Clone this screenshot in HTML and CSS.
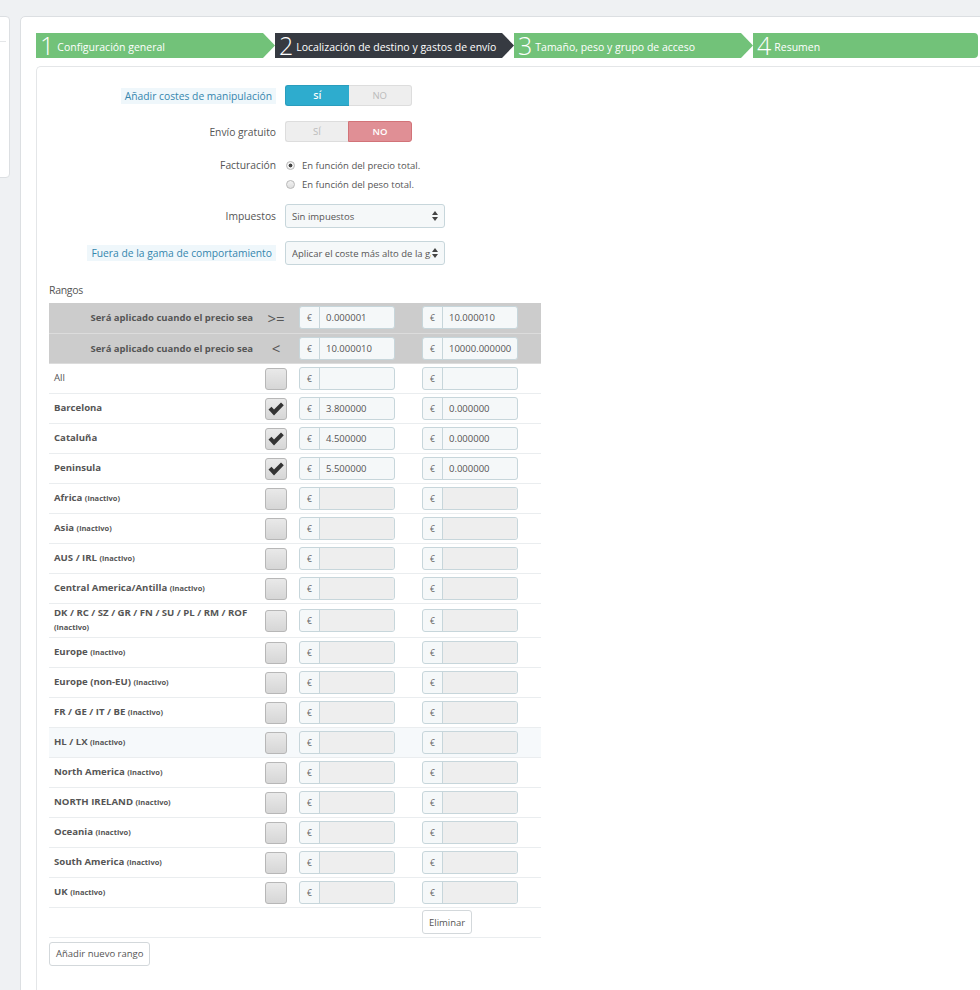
FILE: index.html
```html
<!DOCTYPE html>
<html lang="es">
<head>
    <meta charset="UTF-8">
    <title>Transportista - Localización de destino y gastos de envío</title>
    <link rel="stylesheet" href="styles.css">
</head>
<body>
    <div class="page">
        <aside class="side-panel"><div class="side-line"></div></aside>

        <main class="main-panel">
            <ol class="steps">
                <li class="step step-done"><span class="step-number">1</span><span class="step-label">Configuración general</span></li>
                <li class="step step-current"><span class="step-number">2</span><span class="step-label">Localización de destino y gastos de envío</span></li>
                <li class="step step-done"><span class="step-number">3</span><span class="step-label">Tamaño, peso y grupo de acceso</span></li>
                <li class="step step-done step-last"><span class="step-number">4</span><span class="step-label">Resumen</span></li>
            </ol>

            <section class="step-content">
                <div class="form-row">
                    <div class="form-label"><span class="label-tooltip">Añadir costes de manipulación</span></div>
                    <div class="switch">
                        <span class="switch-option switch-on">SÍ</span>
                        <span class="switch-option">NO</span>
                    </div>
                </div>

                <div class="form-row row-tight">
                    <div class="form-label">Envío gratuito</div>
                    <div class="switch">
                        <span class="switch-option">SÍ</span>
                        <span class="switch-option switch-off">NO</span>
                    </div>
                </div>

                <div class="form-row form-row-top">
                    <div class="form-label">Facturación</div>
                    <div class="radio-group">
                        <label class="radio"><span class="radio-dot checked"></span>En función del precio total.</label>
                        <label class="radio"><span class="radio-dot"></span>En función del peso total.</label>
                    </div>
                </div>

                <div class="form-row row-select">
                    <div class="form-label">Impuestos</div>
                    <div class="select">
                        <span class="select-text">Sin impuestos</span>
                        <svg class="select-arrows" width="6" height="10" viewBox="0 0 6 10"><path d="M3 0 L6 4 L0 4 Z M0 6 L6 6 L3 10 Z" fill="#444"/></svg>
                    </div>
                </div>

                <div class="form-row row-last">
                    <div class="form-label"><span class="label-tooltip">Fuera de la gama de comportamiento</span></div>
                    <div class="select">
                        <span class="select-text">Aplicar el coste más alto de la gama definida</span>
                        <svg class="select-arrows" width="6" height="10" viewBox="0 0 6 10"><path d="M3 0 L6 4 L0 4 Z M0 6 L6 6 L3 10 Z" fill="#444"/></svg>
                    </div>
                </div>

                <div class="ranges-block">
                    <h3 class="ranges-title">Rangos</h3>

                    <table class="ranges">
                        <colgroup>
                            <col class="col-zone">
                            <col class="col-check">
                            <col class="col-range">
                            <col class="col-range-last">
                        </colgroup>
                        <tr class="range-head">
                            <td class="head-label">Será aplicado cuando el precio sea</td>
                            <td class="head-sign">&gt;=</td>
                            <td><div class="input-group"><span class="addon">€</span><span class="input">0.000001</span></div></td>
                            <td><div class="input-group"><span class="addon">€</span><span class="input">10.000010</span></div></td>
                        </tr>
                        <tr class="range-head">
                            <td class="head-label">Será aplicado cuando el precio sea</td>
                            <td class="head-sign">&lt;</td>
                            <td><div class="input-group"><span class="addon">€</span><span class="input">10.000010</span></div></td>
                            <td><div class="input-group"><span class="addon">€</span><span class="input">10000.000000</span></div></td>
                        </tr>
                        <tr>
                            <td class="zone zone-all">All</td>
                            <td><span class="check"></span></td>
                            <td><div class="input-group"><span class="addon">€</span><span class="input"></span></div></td>
                            <td><div class="input-group"><span class="addon">€</span><span class="input"></span></div></td>
                        </tr>
                        <tr>
                            <td class="zone">Barcelona</td>
                            <td><span class="check checked"><svg width="18" height="18" viewBox="0 0 18 18"><path d="M1.5 9.5 L4.5 6.8 L7 9.6 L14 2.5 L16.8 5.3 L7 15.5 Z" fill="#333"/></svg></span></td>
                            <td><div class="input-group"><span class="addon">€</span><span class="input">3.800000</span></div></td>
                            <td><div class="input-group"><span class="addon">€</span><span class="input">0.000000</span></div></td>
                        </tr>
                        <tr>
                            <td class="zone">Cataluña</td>
                            <td><span class="check checked"><svg width="18" height="18" viewBox="0 0 18 18"><path d="M1.5 9.5 L4.5 6.8 L7 9.6 L14 2.5 L16.8 5.3 L7 15.5 Z" fill="#333"/></svg></span></td>
                            <td><div class="input-group"><span class="addon">€</span><span class="input">4.500000</span></div></td>
                            <td><div class="input-group"><span class="addon">€</span><span class="input">0.000000</span></div></td>
                        </tr>
                        <tr>
                            <td class="zone">Peninsula</td>
                            <td><span class="check checked"><svg width="18" height="18" viewBox="0 0 18 18"><path d="M1.5 9.5 L4.5 6.8 L7 9.6 L14 2.5 L16.8 5.3 L7 15.5 Z" fill="#333"/></svg></span></td>
                            <td><div class="input-group"><span class="addon">€</span><span class="input">5.500000</span></div></td>
                            <td><div class="input-group"><span class="addon">€</span><span class="input">0.000000</span></div></td>
                        </tr>
                        <tr class="disabled">
                            <td class="zone">Africa <small>(inactivo)</small></td>
                            <td><span class="check"></span></td>
                            <td><div class="input-group"><span class="addon">€</span><span class="input"></span></div></td>
                            <td><div class="input-group"><span class="addon">€</span><span class="input"></span></div></td>
                        </tr>
                        <tr class="disabled">
                            <td class="zone">Asia <small>(inactivo)</small></td>
                            <td><span class="check"></span></td>
                            <td><div class="input-group"><span class="addon">€</span><span class="input"></span></div></td>
                            <td><div class="input-group"><span class="addon">€</span><span class="input"></span></div></td>
                        </tr>
                        <tr class="disabled">
                            <td class="zone">AUS / IRL <small>(inactivo)</small></td>
                            <td><span class="check"></span></td>
                            <td><div class="input-group"><span class="addon">€</span><span class="input"></span></div></td>
                            <td><div class="input-group"><span class="addon">€</span><span class="input"></span></div></td>
                        </tr>
                        <tr class="disabled">
                            <td class="zone">Central America/Antilla <small>(inactivo)</small></td>
                            <td><span class="check"></span></td>
                            <td><div class="input-group"><span class="addon">€</span><span class="input"></span></div></td>
                            <td><div class="input-group"><span class="addon">€</span><span class="input"></span></div></td>
                        </tr>
                        <tr class="disabled tall">
                            <td class="zone">DK / RC / SZ / GR / FN / SU / PL / RM / ROF <small>(inactivo)</small></td>
                            <td><span class="check"></span></td>
                            <td><div class="input-group"><span class="addon">€</span><span class="input"></span></div></td>
                            <td><div class="input-group"><span class="addon">€</span><span class="input"></span></div></td>
                        </tr>
                        <tr class="disabled">
                            <td class="zone">Europe <small>(inactivo)</small></td>
                            <td><span class="check"></span></td>
                            <td><div class="input-group"><span class="addon">€</span><span class="input"></span></div></td>
                            <td><div class="input-group"><span class="addon">€</span><span class="input"></span></div></td>
                        </tr>
                        <tr class="disabled">
                            <td class="zone">Europe (non-EU) <small>(inactivo)</small></td>
                            <td><span class="check"></span></td>
                            <td><div class="input-group"><span class="addon">€</span><span class="input"></span></div></td>
                            <td><div class="input-group"><span class="addon">€</span><span class="input"></span></div></td>
                        </tr>
                        <tr class="disabled">
                            <td class="zone">FR / GE / IT / BE <small>(inactivo)</small></td>
                            <td><span class="check"></span></td>
                            <td><div class="input-group"><span class="addon">€</span><span class="input"></span></div></td>
                            <td><div class="input-group"><span class="addon">€</span><span class="input"></span></div></td>
                        </tr>
                        <tr class="disabled hover">
                            <td class="zone">HL / LX <small>(inactivo)</small></td>
                            <td><span class="check"></span></td>
                            <td><div class="input-group"><span class="addon">€</span><span class="input"></span></div></td>
                            <td><div class="input-group"><span class="addon">€</span><span class="input"></span></div></td>
                        </tr>
                        <tr class="disabled">
                            <td class="zone">North America <small>(inactivo)</small></td>
                            <td><span class="check"></span></td>
                            <td><div class="input-group"><span class="addon">€</span><span class="input"></span></div></td>
                            <td><div class="input-group"><span class="addon">€</span><span class="input"></span></div></td>
                        </tr>
                        <tr class="disabled">
                            <td class="zone">NORTH IRELAND <small>(inactivo)</small></td>
                            <td><span class="check"></span></td>
                            <td><div class="input-group"><span class="addon">€</span><span class="input"></span></div></td>
                            <td><div class="input-group"><span class="addon">€</span><span class="input"></span></div></td>
                        </tr>
                        <tr class="disabled">
                            <td class="zone">Oceania <small>(inactivo)</small></td>
                            <td><span class="check"></span></td>
                            <td><div class="input-group"><span class="addon">€</span><span class="input"></span></div></td>
                            <td><div class="input-group"><span class="addon">€</span><span class="input"></span></div></td>
                        </tr>
                        <tr class="disabled">
                            <td class="zone">South America <small>(inactivo)</small></td>
                            <td><span class="check"></span></td>
                            <td><div class="input-group"><span class="addon">€</span><span class="input"></span></div></td>
                            <td><div class="input-group"><span class="addon">€</span><span class="input"></span></div></td>
                        </tr>
                        <tr class="disabled">
                            <td class="zone">UK <small>(inactivo)</small></td>
                            <td><span class="check"></span></td>
                            <td><div class="input-group"><span class="addon">€</span><span class="input"></span></div></td>
                            <td><div class="input-group"><span class="addon">€</span><span class="input"></span></div></td>
                        </tr>
                        <tr class="actions">
                            <td></td>
                            <td></td>
                            <td></td>
                            <td><button class="btn" type="button">Eliminar</button></td>
                        </tr>
                    </table>

                    <button class="btn btn-add" type="button">Añadir nuevo rango</button>
                </div>
            </section>
        </main>
    </div>
</body>
</html>
```

FILE: styles.css
```css
* {
    margin: 0;
    padding: 0;
    box-sizing: border-box;
}

html, body {
    overflow: hidden;
}

body {
    font-family: 'Open Sans', 'Liberation Sans', sans-serif;
    font-size: 10px;
    color: #555555;
    background: #eff1f3;
    height: 990px;
}

.page {
    display: flex;
    align-items: flex-start;
    padding-top: 16px;
}

.side-panel {
    flex: none;
    width: 30px;
    height: 162px;
    margin-left: -20px;
    margin-right: 10px;
    padding-top: 24px;
    background: #ffffff;
    border: 1px solid #dcdfe2;
    border-radius: 4px;
}

.side-line {
    height: 1px;
    margin-right: 3px;
    background: #e4e6e8;
}

.main-panel {
    flex: none;
    width: 1000px;
    min-height: 1000px;
    padding: 16px 0 0 15px;
    background: #ffffff;
    border: 1px solid #dcdfe2;
    border-radius: 5px 0 0 0;
}

/* wizard steps */
.steps {
    list-style: none;
    display: flex;
    width: 942px;
    height: 25px;
}

.step {
    flex: none;
    width: 239px;
    display: flex;
    align-items: center;
    padding-left: 4px;
    color: #ffffff;
    background: #72c279;
    clip-path: polygon(0 0, calc(100% - 12px) 0, 100% 50%, calc(100% - 12px) 100%, 0 100%);
}

.step-current {
    background: #363a41;
}

.step-last {
    flex: 1;
    width: auto;
    clip-path: none;
    border-radius: 0 4px 4px 0;
}

.step-number {
    font-size: 25px;
    font-weight: 300;
    line-height: 25px;
    margin-right: 3px;
}

.step-label {
    font-size: 10.5px;
    padding-top: 2px;
}

/* step content */
.step-content {
    margin-top: 8px;
    min-height: 1000px;
    padding-top: 18px;
    border: 1px solid #e4e6e8;
    border-right: none;
    border-radius: 5px 0 0 0;
}

.form-row {
    display: grid;
    grid-template-columns: 239px 160px;
    column-gap: 9px;
    align-items: center;
    margin-bottom: 15px;
}

.row-tight {
    margin-bottom: 14px;
}

.row-select {
    margin-bottom: 13px;
}

.row-last {
    margin-bottom: 0;
}

.form-row-top {
    align-items: start;
    margin-bottom: 10px;
}

.form-row-top .form-label {
    line-height: 19px;
}

.form-label {
    text-align: right;
    font-size: 10.3px;
    color: #555555;
}

.label-tooltip {
    display: inline-block;
    padding: 1px 4px 1px 4px;
    background: #eff7fb;
    color: #3586ae;
}

/* switch */
.switch {
    display: flex;
    width: 127px;
    height: 21px;
}

.switch-option {
    flex: 1;
    display: flex;
    align-items: center;
    justify-content: center;
    font-size: 9.5px;
    color: #bbbbbb;
    background: #eeeeee;
    border: 1px solid #dddddd;
}

.switch-option:first-child {
    border-radius: 3px 0 0 3px;
    border-right: none;
}

.switch-option:last-child {
    border-radius: 0 3px 3px 0;
    border-left: none;
}

.switch-on {
    background: #2eacce;
    border-color: #2a9dbd;
    color: #ffffff;
    font-weight: 600;
}

.switch-off {
    background: #e08f95;
    border-color: #d27378;
    border-left: 1px solid #d27378 !important;
    color: #ffffff;
    font-weight: 600;
}

/* radios */
.radio-group {
    display: flex;
    flex-direction: column;
}

.radio {
    display: flex;
    align-items: center;
    height: 19px;
    font-size: 9.5px;
    white-space: nowrap;
}

.radio-dot {
    width: 9px;
    height: 9px;
    margin: 0 7px 0 1px;
    border: 1px solid #b8b8b8;
    border-radius: 50%;
    background: linear-gradient(#f2f2f2, #dedede);
}

.radio-dot.checked {
    background: radial-gradient(circle, #444444 0 1.7px, #f2f2f2 2.2px);
}

/* select */
.select {
    display: flex;
    align-items: center;
    width: 160px;
    height: 24px;
    padding: 0 6px 0 6px;
    background: #f5f8f9;
    border: 1px solid #c7d6db;
    border-radius: 3px;
    font-size: 9.5px;
    color: #555555;
}

.select-text {
    flex: 1;
    overflow: hidden;
    white-space: nowrap;
}

.select-arrows {
    flex: none;
    margin-left: 1px;
}

/* ranges */
.ranges-block {
    padding-left: 12px;
    padding-top: 18px;
}

.ranges-title {
    font-size: 10.5px;
    font-weight: normal;
    color: #555555;
    line-height: 14px;
    margin-bottom: 6px;
    letter-spacing: -0.3px;
}

.ranges {
    width: 492px;
    border-collapse: collapse;
    table-layout: fixed;
}

.col-zone { width: 206px; }
.col-check { width: 42px; }
.col-range { width: 123px; }
.col-range-last { width: 121px; }

.ranges td {
    height: 30px;
    padding: 0;
    vertical-align: middle;
    border-bottom: 1px solid #eaedef;
}

.ranges td:nth-child(2) {
    text-align: center;
}

.ranges td:nth-child(3),
.ranges td:nth-child(4) {
    padding-left: 2px;
}

.range-head td {
    background: #cccccc;
    border-bottom: 1px solid #dcdcdc;
}

.head-label {
    text-align: right;
    padding-right: 2px !important;
    font-size: 9.5px;
    font-weight: bold;
    color: #555555;
}

.head-sign {
    font-size: 15px;
    color: #555555;
}

.zone {
    padding-left: 5px !important;
    font-size: 9.6px;
    font-weight: bold;
    line-height: 14px;
}

.zone small {
    font-size: 7.5px;
}

.zone-all {
    font-weight: normal;
}

.tall td {
    height: 34px;
}

.hover td {
    background: #f6f9fb;
}

/* checkbox */
.check {
    display: inline-flex;
    align-items: center;
    justify-content: center;
    width: 22px;
    height: 22px;
    margin-top: 1px;
    vertical-align: middle;
    border: 1px solid #b7b7b7;
    border-radius: 3px;
    background: linear-gradient(#e9e9e9, #d6d6d6);
}

/* input group */
.input-group {
    display: flex;
    width: 96px;
    height: 23px;
    border: 1px solid #c7d6db;
    border-radius: 3px;
    background: #f5f8f9;
    overflow: hidden;
}

.addon {
    flex: none;
    width: 20px;
    display: flex;
    align-items: center;
    justify-content: center;
    border-right: 1px solid #c7d6db;
    font-size: 8.5px;
    color: #666666;
}

.input {
    flex: 1;
    display: flex;
    align-items: center;
    padding-left: 6px;
    white-space: nowrap;
    overflow: hidden;
    font-size: 9.5px;
    color: #555555;
}

.disabled .input {
    background: #eeeeee;
}

/* buttons */
.btn {
    height: 24px;
    padding: 0 6px;
    background: #ffffff;
    border: 1px solid #d3d8db;
    border-radius: 3px;
    font-family: 'Open Sans', 'Liberation Sans', sans-serif;
    font-size: 9.5px;
    color: #555555;
}

.actions td {
    border-bottom: 1px solid #eaedef;
}

.btn-add {
    margin-top: 4px;
}
```
